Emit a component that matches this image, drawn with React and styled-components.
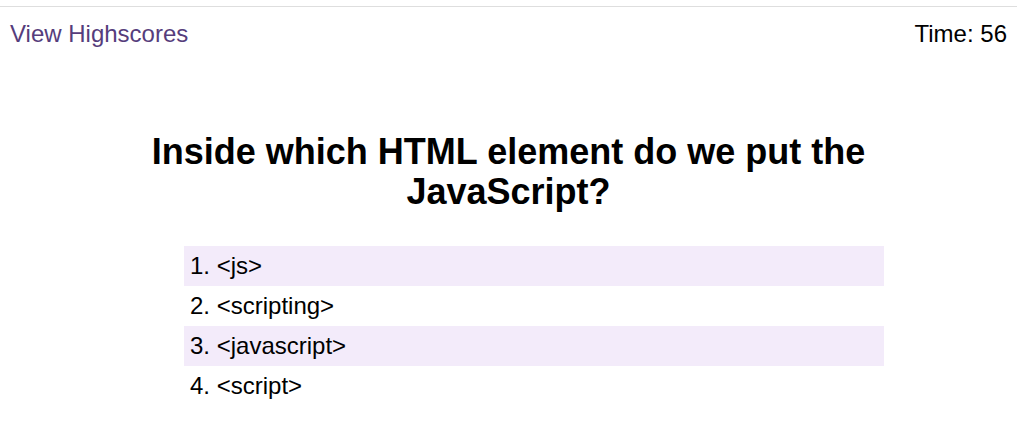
import { createGlobalStyle } from "styled-components";
import styled from "styled-components";

const GlobalStyle = createGlobalStyle`
  body {
    margin: 0;
    font-family: "Liberation Sans", Arial, sans-serif;
    background: #fff;
    color: #000;
  }
`;

const questions = {
  title: "Inside which HTML element do we put the JavaScript?",
  choices: ["<js>", "<scripting>", "<javascript>", "<script>"],
};

const App = () => {
  return (
    <>
      <GlobalStyle />
      <Header>
        <HighscoreLink href="#">View Highscores</HighscoreLink>
        <Timer>Time: 56</Timer>
      </Header>
      <Quiz>
        <Question>{questions.title}</Question>
        <Choices>
          {questions.choices.map((c, i) => (
            <Choice key={c} $shaded={i % 2 === 0}>
              {i + 1}. {c}
            </Choice>
          ))}
        </Choices>
      </Quiz>
    </>
  );
};

const Header = styled.header`
  margin-top: 6px;
  border-top: 1px solid #dedede;
  display: flex;
  justify-content: space-between;
  align-items: center;
  padding: 13px 10px 0 10px;
  font-size: 24px;
  line-height: 28px;
`;

const HighscoreLink = styled.a`
  color: #563d7c;
  text-decoration: none;
`;

const Timer = styled.div`
  color: #000;
`;

const Quiz = styled.main`
  display: flex;
  flex-direction: column;
  align-items: center;
  padding-top: 84px;
`;

const Question = styled.h1`
  margin: 0;
  width: 760px;
  font-size: 36px;
  line-height: 40px;
  text-align: center;
  font-weight: bold;
`;

const Choices = styled.ul`
  list-style: none;
  margin: 34px 0 0 51px;
  padding: 0;
  width: 700px;
`;

const Choice = styled.li`
  height: 40px;
  line-height: 40px;
  padding-left: 6px;
  font-size: 24px;
  background-color: ${(p) => (p.$shaded ? "#f3ebfa" : "transparent")};
`;

export default App;
